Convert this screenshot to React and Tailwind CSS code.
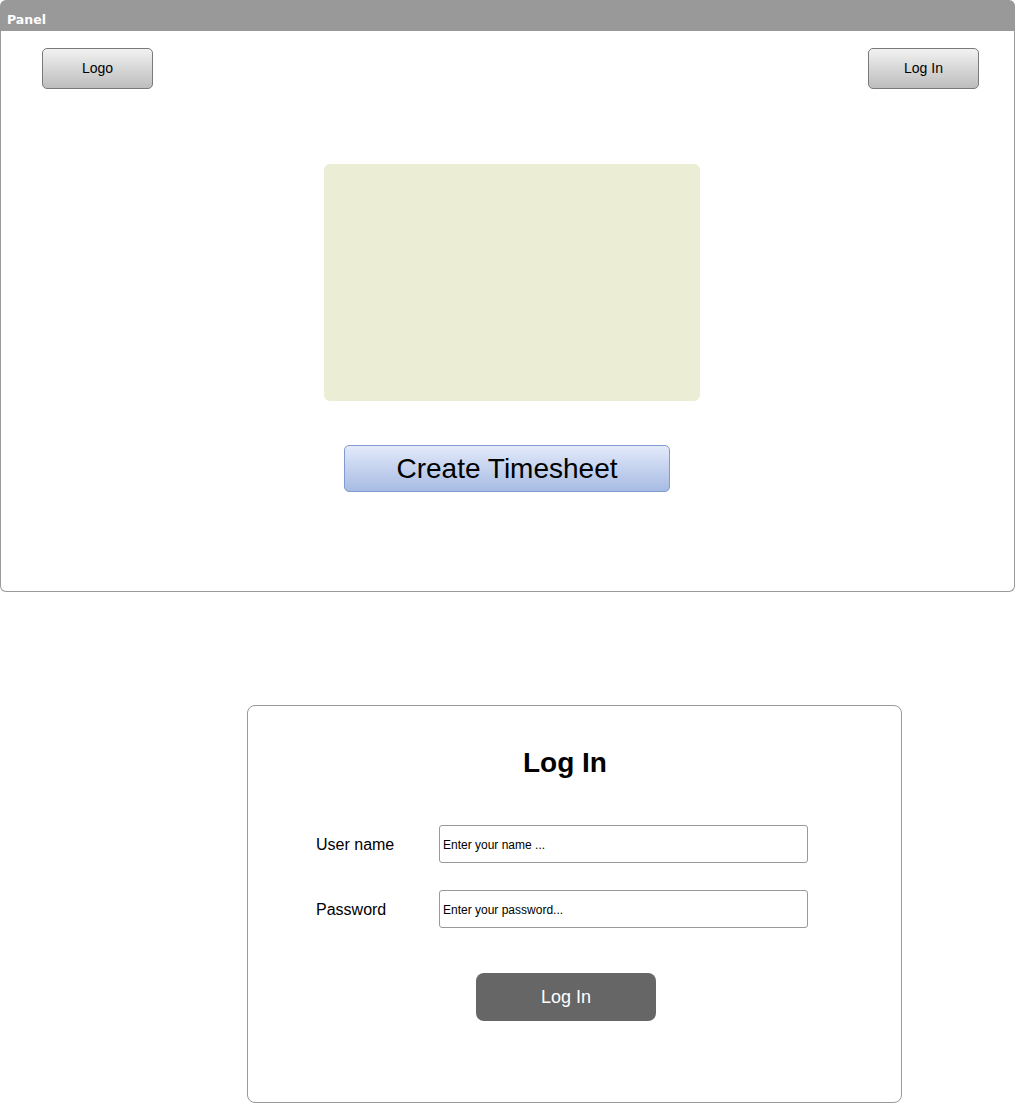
const font = { fontFamily: '"Liberation Sans", Arial, sans-serif' };

const GrayButton = ({ label }) => (
  <button className="w-[111px] h-[41px] rounded-[5px] border border-[#7a7a7a] bg-gradient-to-b from-[#f2f2f2] to-[#bdbdbd] text-[14px] text-black">
    {label}
  </button>
);

const Field = ({ label, placeholder }) => (
  <div className="flex items-center">
    <label className="w-[123px] pt-[2px] text-[16px] text-black">{label}</label>
    <input
      type="text"
      placeholder={placeholder}
      className="w-[369px] h-[38px] rounded-[3px] border border-[#999] px-[3px] pt-[2px] text-[12px] text-black placeholder:text-black outline-none"
    />
  </div>
);

export default function App() {
  return (
    <div className="w-[1015px] bg-white" style={font}>
      {/* Top panel */}
      <div className="flex flex-col">
        <div className="h-[31px] rounded-t-[6px] bg-[#999999] px-[7px] flex items-center pt-[9px]">
          <span
            className="text-[12.5px] font-bold text-white"
            style={{ fontFamily: '"DejaVu Sans", Verdana, sans-serif' }}
          >
            Panel
          </span>
        </div>
        <div className="h-[561px] border-x border-b border-[#999] rounded-b-[6px] flex flex-col">
          <div className="flex justify-between pl-[41px] pr-[35px] pt-[17px]">
            <GrayButton label="Logo" />
            <GrayButton label="Log In" />
          </div>

          <div className="ml-[323px] mt-[75px] w-[376px] h-[237px] rounded-[6px] bg-[#ebeed5]" />

          <button className="ml-[343px] mt-[44px] w-[326px] h-[47px] rounded-[5px] border border-[#7f9bd0] bg-gradient-to-b from-[#e3eafa] to-[#a7bbe3] text-[28px] text-black leading-none">
            Create Timesheet
          </button>
        </div>
      </div>

      {/* Login panel */}
      <div className="mt-[113px] ml-[247px] w-[655px] h-[398px] rounded-[8px] border border-[#999] flex flex-col">
        <h1 className="mt-[41px] ml-[267px] w-[100px] text-center text-[28px] font-bold leading-[32px] text-black">
          Log In
        </h1>

        <div className="mt-[46px] ml-[68px] flex flex-col gap-[27px]">
          <Field label="User name" placeholder="Enter your name ..." />
          <Field label="Password" placeholder="Enter your password..." />
        </div>

        <button className="mt-[45px] ml-[228px] w-[180px] h-[48px] rounded-[8px] bg-[#666666] text-[18px] text-white">
          Log In
        </button>
      </div>
    </div>
  );
}
